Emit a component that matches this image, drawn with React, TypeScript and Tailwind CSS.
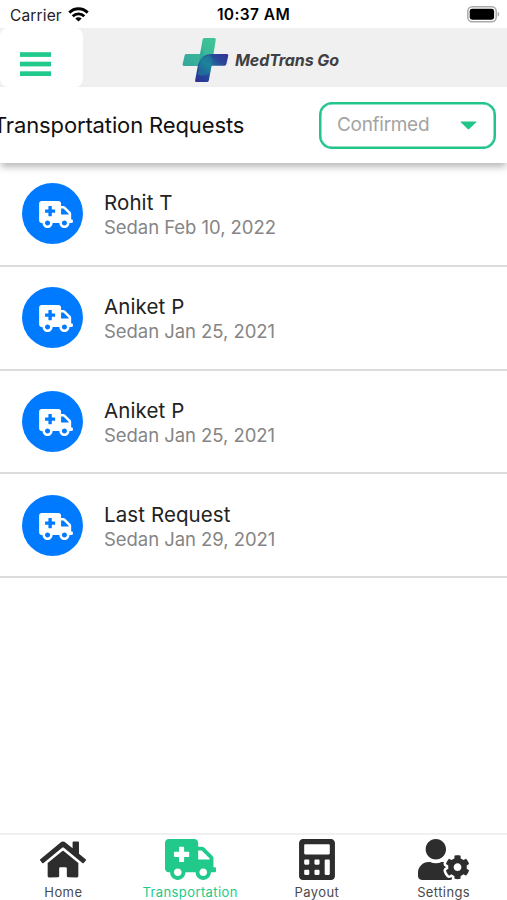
import React from 'react'
import { FaAmbulance, FaCalculator, FaHome, FaUserCog } from 'react-icons/fa'

const requests = [
    { name: 'Rohit T', detail: 'Sedan Feb 10, 2022' },
    { name: 'Aniket P', detail: 'Sedan Jan 25, 2021' },
    { name: 'Aniket P', detail: 'Sedan Jan 25, 2021' },
    { name: 'Last Request', detail: 'Sedan Jan 29, 2021' },
]

const tabs = [
    { label: 'Home', icon: FaHome, size: 'w-[46px]', active: false },
    { label: 'Transportation', icon: FaAmbulance, size: 'w-[51px]', active: true },
    { label: 'Payout', icon: FaCalculator, size: 'w-[36px]', active: false },
    { label: 'Settings', icon: FaUserCog, size: 'w-[51px]', active: false },
]

function StatusBar(): React.JSX.Element {
    return (
        <div className="grid h-7 shrink-0 grid-cols-3 items-center pt-0.5 text-black">
            <div className="flex items-center gap-[6px] pl-[10px]">
                <span className="pt-px text-[15.5px] leading-5 tracking-[0.15px] text-[#222]">Carrier</span>
                <svg className="-mt-0.5" width="21" height="15" viewBox="0 0 21 15" fill="none" stroke="#000" strokeWidth="2.9">
                    <path d="M1.3 5.6C6.5.5 14.5.5 19.7 5.6" />
                    <path d="M4.7 9.2c3.3-3.1 8.3-3.1 11.6 0" />
                    <path d="M10.5 14.6 7.3 11.5c1.8-1.6 4.6-1.6 6.4 0z" fill="#000" stroke="none" />
                </svg>
            </div>
            <span className="text-center text-[15.5px] font-semibold leading-5 tracking-[0.4px]">10:37 AM</span>
            <div className="flex justify-end pb-0.5 pr-[7px]">
                <svg width="33" height="17" viewBox="0 0 33 17">
                    <rect x=".8" y=".8" width="28.4" height="14.9" rx="4.4" fill="#fff" stroke="#aaa" strokeWidth="1.5" />
                    <rect x="2.7" y="2.8" width="24.4" height="10.9" rx="2.4" />
                    <path d="M30.7 5.8c2 .8 2 4.2 0 5z" fill="#aaa" />
                </svg>
            </div>
        </div>
    )
}

function Logo(): React.JSX.Element {
    return (
        <div className="flex items-center gap-[6px]">
            <svg width="47" height="46" viewBox="0 0 47 46">
                <defs>
                    <linearGradient id="mint" x1="0" y1="1" x2="1" y2="0">
                        <stop offset="0" stopColor="#35a69c" />
                        <stop offset="1" stopColor="#3fc795" />
                    </linearGradient>
                    <linearGradient id="navy" x1="0" y1="1" x2="1" y2="0">
                        <stop offset="0" stopColor="#2d2d91" />
                        <stop offset=".3" stopColor="#26489b" />
                        <stop offset=".5" stopColor="#217c9c" />
                        <stop offset=".75" stopColor="#2b4698" />
                        <stop offset="1" stopColor="#353496" />
                    </linearGradient>
                </defs>
                <path d="M22.4 1h10q1.6 0 1.4 1.6L31.5 17 17 29H2q-1.8 0-1.4-1.7L2.6 18.4Q2.9 17 4.5 17H18L20.6 2.5Q20.9 1 22.4 1z" fill="url(#mint)" />
                <path d="M18 17 17 26 22 20 20.8 12z" fill="#2b9b96" opacity=".5" />
                <path d="M30 17h14.8q1.8 0 1.5 1.5L44.4 27q-.4 1.8-2 1.8H29.5L26.8 43.4Q26.5 45 25 45H14.5q-1.7 0-1.4-1.6L15.6 30Q18 17 30 17z" fill="url(#navy)" />
                <path d="M17 29q2-7 10.5-11.2Q32 22 29.5 29l-1.3 7q-5 4-12.5 2z" fill="#198b9b" opacity=".5" />
            </svg>
            <span className="whitespace-nowrap text-[16px] font-bold italic leading-5 tracking-[-0.1px] text-[#404042]">MedTrans Go</span>
        </div>
    )
}

function Header(): React.JSX.Element {
    return (
        <header className="relative z-10 shrink-0">
            <div className="flex h-[59px] items-center bg-[#f0f0f0]">
                <button className="flex h-full w-[83px] items-center rounded-lg bg-white pl-5 pt-[13px]">
                    <svg width="31" height="25" viewBox="0 0 31 25" fill="#21ca8b">
                        <rect y=".2" width="31" height="4.7" />
                        <rect y="9.7" width="31" height="4.7" />
                        <rect y="19.3" width="31" height="4.7" />
                    </svg>
                </button>
                <div className="ml-[99px] pt-1">
                    <Logo />
                </div>
            </div>
            <div className="flex h-[76px] items-center justify-between bg-white pr-[11px] shadow-[0_5px_7px_-1px_rgba(0,0,0,0.28)]">
                <h1 className="-ml-[7px] whitespace-nowrap text-[22px] leading-7 tracking-[-0.13px] text-[#111]">Transportation Requests</h1>
                <button className="flex h-[47px] w-[177px] items-center justify-between rounded-[13px] border-2 border-[#21c58a] pl-4 pr-[17px] shadow-[inset_0_0_0_0.5px_#21c58a]">
                    <span className="text-[19px] leading-6 tracking-[-0.3px] text-[#a3a3a3]">Confirmed</span>
                    <svg width="17" height="9" viewBox="0 0 17 9" fill="#21c58a">
                        <path d="M1 .5h15q.8 0 .2.7L9.3 7.9q-.8.7-1.6 0L.8 1.2Q.2.5 1 .5z" />
                    </svg>
                </button>
            </div>
        </header>
    )
}

function App(): React.JSX.Element {
    return (
        <div className="flex h-screen w-full flex-col overflow-hidden bg-white font-['Inter',sans-serif]">
            <StatusBar />
            <Header />
            <main className="flex-1">
                {requests.map((request, i) => (
                    <div key={i} className="flex h-[103.8px] items-center border-b-2 border-[#dcdcdc] pl-[22px]">
                        <div className="flex size-[61px] shrink-0 items-center justify-center rounded-full bg-[#007bff] pl-[7px] pt-0.5 text-white">
                            <FaAmbulance className="h-[27px] w-[34px]" />
                        </div>
                        <div className="ml-[21px] pt-[3px]">
                            <p className="text-[20.5px] leading-[25px] tracking-[0.1px] text-[#222]">{request.name}</p>
                            <p className="text-[18.5px] leading-[25px] tracking-[-0.05px] text-[#858585]">{request.detail}</p>
                        </div>
                    </div>
                ))}
            </main>
            <nav className="grid h-[67px] shrink-0 grid-cols-4 border-t-2 border-[#f0f0f0]">
                {tabs.map(({ label, icon: Icon, size, active }) => (
                    <a key={label} className={`flex flex-col items-center pt-1 ${active ? 'text-[#21ca8b]' : 'text-[#2d2d2d]'}`}>
                        <Icon className={`h-[41px] ${size}`} />
                        <span className={`mt-1 text-[13px] leading-4 tracking-[0.4px] ${active ? '' : 'text-[#4a4a4a]'}`}>{label}</span>
                    </a>
                ))}
            </nav>
        </div>
    )
}

export default App
